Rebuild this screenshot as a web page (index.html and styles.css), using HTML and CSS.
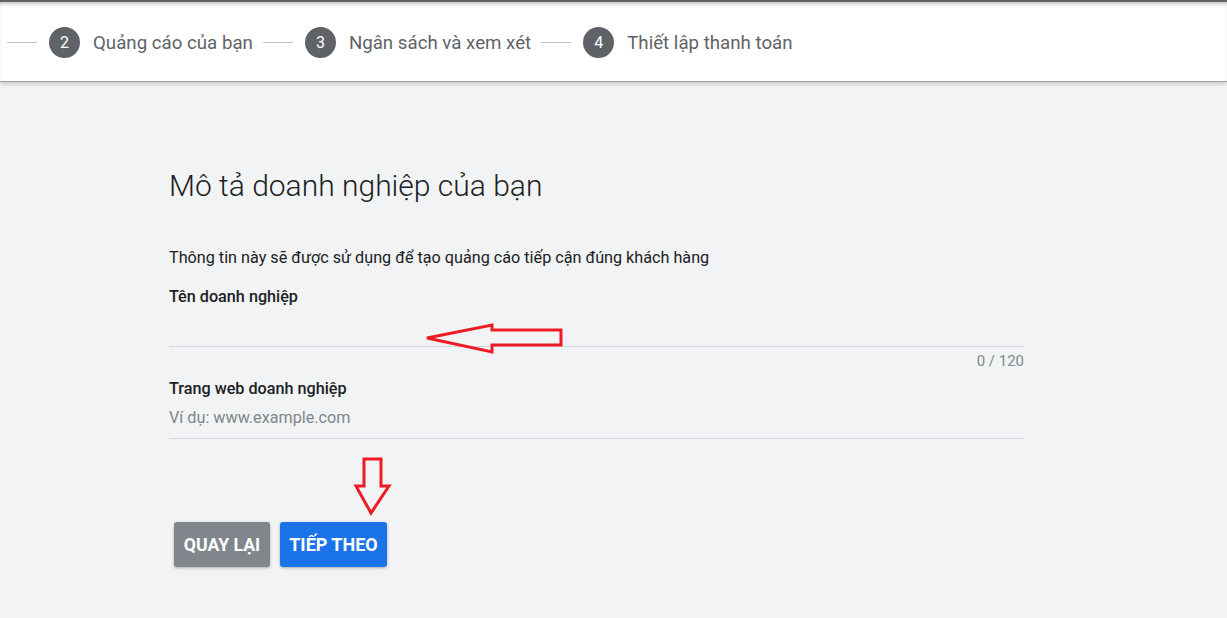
FILE: index.html
```html
<!DOCTYPE html>
<html lang="vi">
<head>
<meta charset="utf-8">
<title>Mô tả doanh nghiệp của bạn</title>
<link rel="stylesheet" href="styles.css">
</head>
<body>
<header class="stepper">
  <div class="steps">
    <span class="connector"></span>
    <div class="step"><span class="num">2</span><span class="label">Quảng cáo của bạn</span></div>
    <span class="connector"></span>
    <div class="step"><span class="num">3</span><span class="label">Ngân sách và xem xét</span></div>
    <span class="connector"></span>
    <div class="step"><span class="num">4</span><span class="label">Thiết lập thanh toán</span></div>
  </div>
</header>
<main class="content">
  <h1 class="title">Mô tả doanh nghiệp của bạn</h1>
  <p class="desc">Thông tin này sẽ được sử dụng để tạo quảng cáo tiếp cận đúng khách hàng</p>
  <div class="field">
    <div class="field-label">Tên doanh nghiệp</div>
    <div class="input"><span class="placeholder"></span></div>
    <div class="counter">0 / 120</div>
  </div>
  <div class="field field-2">
    <div class="field-label">Trang web doanh nghiệp</div>
    <div class="input"><span class="placeholder">Ví dụ: www.example.com</span></div>
  </div>
  <div class="actions">
    <button class="btn btn-back">QUAY LẠI</button>
    <button class="btn btn-next">TIẾP THEO</button>
  </div>
</main>
<svg class="annot annot-left" width="142" height="32" viewBox="0 0 142 32">
  <polygon points="3,16 68,3 68,8 137,8 137,23 68,23 68,30" fill="none" stroke="#ed1c24" stroke-width="3" stroke-linejoin="miter"/>
</svg>
<svg class="annot annot-down" width="40" height="60" viewBox="0 0 40 60">
  <polygon points="11,3 28,3 28,30 36,30 18,57 3,30 11,30" fill="none" stroke="#ed1c24" stroke-width="3" stroke-linejoin="miter"/>
</svg>
</body>
</html>
```
FILE: styles.css
```css
* { box-sizing: border-box; }
html, body { margin: 0; padding: 0; }
body {
  background: #f1f3f4;
  font-family: Roboto, "Noto Sans", "Liberation Sans", sans-serif;
  color: #202124;
  width: 1227px;
  height: 618px;
  overflow: hidden;
  position: relative;
}
.stepper {
  background: #fff;
  height: 82px;
  border-top: 2px solid #5f6368;
  border-bottom: 1px solid #a0a0a0;
  box-shadow: inset 0 4px 4px -2px rgba(0,0,0,0.25), 0 2px 4px rgba(0,0,0,0.18);
  position: relative;
  z-index: 1;
}
.steps {
  display: flex;
  align-items: center;
  height: 79px;
  padding: 2px 0 0 7px;
}
.connector {
  width: 30px;
  height: 1px;
  background: #bdc1c6;
  margin-right: 12px;
}
.step {
  display: flex;
  align-items: center;
  margin-right: 10px;
}
.num {
  width: 31px;
  height: 31px;
  border-radius: 50%;
  background: #5f6368;
  color: #fff;
  font-size: 16px;
  display: flex;
  align-items: center;
  justify-content: center;
  margin-right: 13px;
}
.label {
  font-size: 18.7px;
  color: #5f6368;
}
.content {
  padding: 86px 0 0 169px;
  width: 1024px;
}
.title {
  margin: 0;
  font-size: 30px;
  font-weight: 300;
  line-height: 36px;
  color: #202124;
}
.desc {
  margin: 44px 0 0;
  font-size: 16.2px;
  line-height: 20px;
  color: #202124;
}
.field { margin-top: 19px; }
.field-2 { margin-top: 10px; }
.field-label {
  font-size: 16.2px;
  font-weight: 500;
  line-height: 20px;
  color: #202124;
}
.input {
  height: 40px;
  padding: 9px 0 10px;
  border-bottom: 1px solid #d3d5d8;
  font-size: 16.2px;
  line-height: 20px;
}
.placeholder { color: #80868b; }
.counter {
  margin-top: 6px;
  text-align: right;
  font-size: 15px;
  line-height: 16px;
  color: #80868b;
}
.actions {
  display: flex;
  gap: 10px;
  margin-top: 83px;
  padding-left: 5px;
}
.btn {
  height: 45px;
  border: none;
  border-radius: 3px;
  color: #fff;
  font-family: Roboto, "Noto Sans", sans-serif;
  font-size: 17.7px;
  font-weight: 700;
  padding: 0;
  box-shadow: 0 1px 3px rgba(0,0,0,0.3);
}
.btn-back { background: #80868b; width: 96px; }
.btn-next { background: #1a73e8; width: 107px; font-size: 18px; }
.annot { position: absolute; z-index: 2; }
.annot-left { left: 424px; top: 322px; }
.annot-down { left: 353px; top: 456px; }
```
